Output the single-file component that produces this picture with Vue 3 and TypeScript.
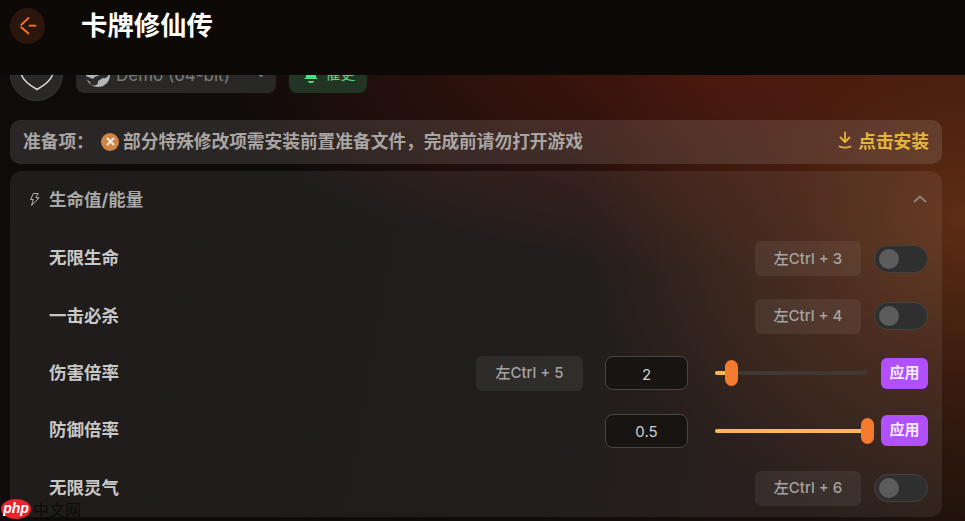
<script setup lang="ts">
import { ref } from 'vue'

interface Row {
  name: string
  hotkey?: string
  value?: string
  percent?: number
}

const rows = ref<Row[]>([
  { name: '无限生命', hotkey: '左Ctrl + 3' },
  { name: '一击必杀', hotkey: '左Ctrl + 4' },
  { name: '伤害倍率', hotkey: '左Ctrl + 5', value: '2', percent: 11 },
  { name: '防御倍率', value: '0.5', percent: 100 },
  { name: '无限灵气', hotkey: '左Ctrl + 6' },
])
</script>

<template>
  <div class="page">
    <header class="topbar">
      <button class="back">
        <svg width="20" height="20" viewBox="0 0 20 20" fill="none" stroke="#f97a22" stroke-width="1.800" stroke-linecap="round">
          <path d="M10.500 2 3.200 8.800M3.200 11.300 10.500 17.500M11.500 9.700h6" />
        </svg>
      </button>
      <h1>卡牌修仙传</h1>
    </header>

    <div class="game-row">
      <div class="shield">
        <svg width="34" height="38" viewBox="0 0 34 38" fill="none" stroke="#d8d8d8" stroke-width="1.500" stroke-linejoin="round">
          <path d="M1.500 4V19Q4 26 17 33.500Q30 26 32.500 19V4" />
        </svg>
      </div>
      <div class="version">
        <svg class="steam" width="24" height="24" viewBox="0 0 24 24">
          <circle cx="12" cy="12" r="12" fill="#b5b5b5" />
          <path d="M0 13l7 3c1-2 3-3 5-3l4-5a4 4 0 1 1 1 7l-5 3a4 4 0 0 1-8 1L0 16z" fill="#2c2a2a" />
        </svg>
        <span>Demo (64-bit)</span>
        <svg width="10" height="10" viewBox="0 0 10 10" fill="none" stroke="#8a8a8a" stroke-width="1.200">
          <path d="M2 3.500 5 6.500 8 3.500" />
        </svg>
      </div>
      <div class="notice">
        <svg width="16" height="18" viewBox="0 0 16 18" fill="#4ade80">
          <path d="M8 1a5 5 0 0 0-5 5v5l-2 2h14l-2-2V6a5 5 0 0 0-5-5z" />
          <path d="M5 15h6a3 2 0 0 1-6 0z" />
        </svg>
        <span>催更</span>
      </div>
    </div>

    <div class="prepare">
      <span class="prepare-label">准备项：</span>
      <span class="prepare-dot">
        <svg width="9" height="9" viewBox="0 0 9 9" stroke="#eee" stroke-width="2" stroke-linecap="round">
          <path d="M1.500 1.500l6 6M7.500 1.500l-6 6" />
        </svg>
      </span>
      <span class="prepare-text">部分特殊修改项需安装前置准备文件，完成前请勿打开游戏</span>
      <span class="install">
        <svg width="14" height="18" viewBox="0 0 14 18" fill="none" stroke="#e4b53c" stroke-width="1.800" stroke-linecap="round" stroke-linejoin="round">
          <path d="M7 1.500v9M2.500 6.500 7 11l4.500-4.500M1.500 15.500c3 1.300 8 1.300 11 0" />
        </svg>
        点击安装
      </span>
    </div>

    <section class="panel">
      <div class="panel-head">
        <svg width="11" height="15" viewBox="0 0 13 16" fill="none" stroke="#cfcfcf" stroke-width="1" stroke-linejoin="round">
          <path d="M5 1h6L8 6h4L3 15l2-7H2z" />
        </svg>
        <span class="panel-title">生命值/能量</span>
        <svg class="chevron" width="14" height="14" viewBox="0 0 14 14" fill="none" stroke="#8f8380" stroke-width="1.800" stroke-linecap="round" stroke-linejoin="round">
          <path d="M1.500 9.500 7 4.500l5.500 5" />
        </svg>
      </div>

      <div v-for="row in rows" :key="row.name" class="row">
        <span class="row-name">{{ row.name }}</span>
        <span v-if="row.hotkey" class="hotkey" :class="{ 'hotkey-wide': row.value }">{{ row.hotkey }}</span>
        <template v-if="row.value">
          <div class="num-input">{{ row.value }}</div>
          <div class="slider">
            <div class="slider-fill" :style="{ width: row.percent + '%' }"></div>
            <div class="slider-thumb" :style="{ left: row.percent + '%' }"></div>
          </div>
          <button class="apply">应用</button>
        </template>
        <div v-else class="toggle"><span class="knob"></span></div>
      </div>
    </section>

    <div class="watermark">
      <span class="php">php</span>
      <span class="cn">中文网</span>
    </div>
  </div>
</template>

<style scoped>
.page {
  position: relative;
  width: 965px;
  height: 521px;
  overflow: hidden;
  box-sizing: border-box;
  padding: 48px 23px 0 10px;
  font-family: Inter, "Noto Sans CJK SC", "Liberation Sans", sans-serif;
  background:
    radial-gradient(ellipse 380px 320px at 100% 42%, rgba(100, 48, 20, 0.9), rgba(86, 38, 18, 0.5) 50%, rgba(60, 20, 14, 0) 100%),
    radial-gradient(ellipse 520px 210px at 76% 12%, rgba(84, 24, 14, 0.85), rgba(60, 20, 14, 0) 100%),
    linear-gradient(100deg, #0e0b0a 0%, #100c0b 55%, #1e120c 100%);
}

.topbar {
  position: absolute;
  top: 0;
  left: 0;
  right: 0;
  height: 75px;
  z-index: 2;
  background: #0d0906;
  display: flex;
  align-items: flex-start;
  padding: 8px 0 0 10px;
  box-sizing: border-box;
}

.back {
  width: 35px;
  height: 36px;
  border: none;
  border-radius: 50%;
  background: #2a160c;
  padding: 0;
  display: flex;
  align-items: center;
  justify-content: center;
}

.topbar h1 {
  margin: -2px 0 0 36px;
  font-size: 26.400px;
  line-height: 38px;
  font-weight: 700;
  color: #fff;
}

.game-row {
  display: flex;
  align-items: flex-end;
  height: 53px;
}

.shield {
  width: 53px;
  height: 53px;
  box-sizing: border-box;
  border-radius: 50%;
  border: 1px solid #39363a;
  background: #2a2827;
  display: flex;
  align-items: center;
  justify-content: center;
}

.version {
  margin: 0 0 8px 13px;
  width: 200px;
  height: 36px;
  box-sizing: border-box;
  border-radius: 8px;
  background: #2a2727;
  display: flex;
  align-items: center;
  padding: 0 10px;
  color: #7a7a7a;
  font-size: 17px;
}

.version span {
  margin-left: 6px;
  flex: 1;
}

.notice {
  margin: 0 0 8px 13px;
  width: 78px;
  height: 36px;
  box-sizing: border-box;
  border-radius: 8px;
  background: #223424;
  display: flex;
  align-items: center;
  justify-content: center;
  gap: 6px;
  padding-left: 3px;
  color: #4ade80;
  font-size: 15px;
}

.notice span {
  margin-bottom: 5px;
}

.prepare {
  margin-top: 19px;
  height: 44px;
  border-radius: 10px;
  background: rgba(255, 255, 255, 0.115);
  display: flex;
  align-items: center;
  padding: 0 13px;
  font-size: 17.700px;
  font-weight: 700;
  color: #a9a5a3;
}

.prepare-label {
  width: 78px;
  margin-bottom: 4px;
}

.prepare-dot {
  width: 18px;
  height: 18px;
  border-radius: 50%;
  background: #cf8545;
  display: flex;
  align-items: center;
  justify-content: center;
  margin: 0 4px 1px 0;
}

.prepare-text {
  flex: 1;
  white-space: nowrap;
  margin-bottom: 4px;
}

.install {
  display: flex;
  align-items: center;
  gap: 6px;
  margin-bottom: 4px;
  color: #e4b53c;
}

.panel {
  margin-top: 7px;
  height: 346px;
  border-radius: 12px;
  background: rgba(255, 255, 255, 0.07);
}

.panel-head {
  height: 59px;
  display: flex;
  align-items: center;
  padding: 0 15px 0 19px;
  color: #a8a8a8;
  font-size: 17.500px;
  font-weight: 700;
}

.panel-title {
  margin-left: 9px;
  margin-bottom: 4px;
  flex: 1;
}

.chevron {
  margin-bottom: 4px;
}

.panel-head > svg:first-child {
  margin-bottom: 2px;
}

.row {
  height: 57.400px;
  display: flex;
  align-items: center;
  justify-content: flex-end;
  padding: 0 14px 0 39px;
}

.row-name {
  margin-right: auto;
  margin-bottom: 4px;
  font-size: 17.500px;
  font-weight: 700;
  color: #c8c8c8;
}

.hotkey {
  width: 106px;
  height: 35px;
  box-sizing: border-box;
  padding-bottom: 3px;
  border-radius: 6px;
  background: rgba(255, 255, 255, 0.065);
  color: #a6a3a1;
  font-size: 15px;
  font-weight: 500;
  display: flex;
  align-items: center;
  justify-content: center;
}

.hotkey-wide {
  margin-right: 22px;
  width: 107px;
}

.toggle {
  margin-left: 13px;
  width: 54px;
  height: 28px;
  box-sizing: border-box;
  border-radius: 14px;
  border: 1px solid #45423f;
  background: #2f2f2f;
  display: flex;
  align-items: center;
  padding-left: 4px;
}

.knob {
  width: 20px;
  height: 20px;
  border-radius: 50%;
  background: #5c5c5c;
}

.num-input {
  width: 83px;
  height: 34px;
  box-sizing: border-box;
  padding-top: 2px;
  border-radius: 8px;
  border: 1px solid #4a4643;
  background: #171412;
  color: #cfcfcf;
  font-size: 15px;
  display: flex;
  align-items: center;
  justify-content: center;
}

.slider {
  position: relative;
  margin: 0 13px 0 27px;
  width: 153px;
  height: 4px;
  border-radius: 2px;
  background: #413834;
}

.slider-fill {
  height: 100%;
  border-radius: 2px;
  background: #fbb954;
}

.slider-thumb {
  position: absolute;
  top: -11px;
  width: 13px;
  height: 26px;
  margin-left: -7px;
  border-radius: 7px;
  background: #f47a2e;
}

.apply {
  width: 47px;
  height: 31px;
  border: none;
  border-radius: 6px;
  background: #b150ff;
  color: #f4eafd;
  font-family: inherit;
  font-size: 15px;
  font-weight: 700;
  padding: 0 0 4px;
}

.watermark {
  position: absolute;
  left: 1px;
  bottom: 1px;
  display: flex;
  align-items: center;
  height: 22px;
}

.php {
  width: 30px;
  height: 20px;
  border-radius: 50%;
  background: #e8242c;
  color: #fff;
  font-family: "Liberation Sans", sans-serif;
  font-style: italic;
  font-weight: 700;
  font-size: 14px;
  line-height: 18px;
  text-align: center;
}

.cn {
  margin-left: 2px;
  color: #0c0c0c;
  font-size: 16px;
}
</style>

<style>
body {
  background: #0e0b0a;
}
</style>
